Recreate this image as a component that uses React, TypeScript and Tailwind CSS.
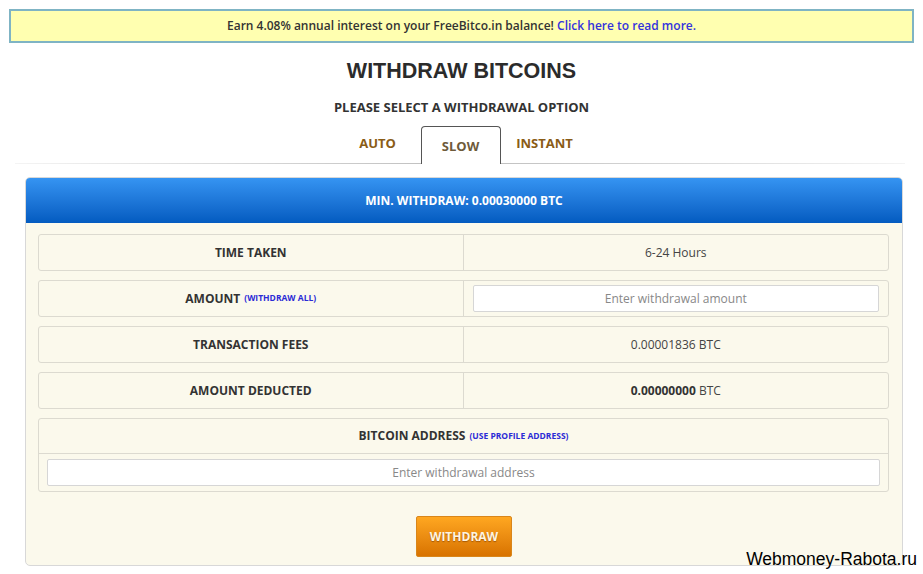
import React from "react";

const rows = [
  { label: "TIME TAKEN", value: "6-24 Hours" },
  { label: "AMOUNT", link: "(WITHDRAW ALL)", input: "Enter withdrawal amount" },
  { label: "TRANSACTION FEES", value: "0.00001836 BTC" },
  { label: "AMOUNT DEDUCTED", value: "0.00000000", bold: true },
];

function InfoRow({ row }: { row: (typeof rows)[number] }) {
  return (
    <div className="grid h-[37px] grid-cols-2 rounded-[3px] border border-[#dcdad0] bg-[#fbf9ec]">
      <div className="flex items-center justify-center border-r border-[#dcdad0] text-[12px] font-bold text-[#333]">
        {row.label}
        {row.link && (
          <span className="ml-1 text-[8.5px] font-bold text-[#2b2bd6]">{row.link}</span>
        )}
      </div>
      <div className="flex items-center justify-center px-[9px] text-[12px] text-[#444]">
        {row.input ? (
          <div className="flex h-[27px] w-full items-center justify-center rounded-[2px] border border-[#d6d6d6] bg-white text-[12px] text-[#888]">
            {row.input}
          </div>
        ) : row.bold ? (
          <span>
            <b className="text-[#333]">{row.value}</b> BTC
          </span>
        ) : (
          row.value
        )}
      </div>
    </div>
  );
}

export default function App() {
  return (
    <main
      className="relative h-[574px] w-[923px] overflow-hidden bg-white"
      style={{ fontFamily: "'Open Sans', 'Liberation Sans', sans-serif" }}
    >
      <div className="px-[9px] pt-[9px]">
        <div className="flex h-[34px] items-center justify-center border-2 border-[#7fb4c4] bg-[#ffffb0] text-[12px] font-semibold text-[#333]">
          Earn 4.08% annual interest on your FreeBitco.in balance!&nbsp;
          <span className="text-[#3333dd]">Click here to read more.</span>
        </div>
      </div>

      <h1 className="mt-[16px] text-center font-['Liberation_Sans',Arial,sans-serif] text-[21.5px] font-bold leading-[24px] text-[#2b2b2b]">
        WITHDRAW BITCOINS
      </h1>
      <p className="mt-[15px] text-center text-[13px] font-bold leading-[18px] text-[#333]">
        PLEASE SELECT A WITHDRAWAL OPTION
      </p>

      <div className="relative mt-[10px] h-[38px]">
        <div className="absolute bottom-0 left-[15px] right-[18px] h-px bg-gradient-to-r from-[#f4f4f4] via-[#bdbdbd] to-[#f4f4f4]" />
        <div className="relative flex h-full items-end justify-center text-[13px] font-bold text-[#8a5c16]">
          <div className="flex h-full w-[86px] items-center justify-center pb-[3px]">AUTO</div>
          <div className="flex h-full w-[80px] items-center justify-center rounded-t-[4px] border border-b-0 border-[#555] bg-white pt-[2px] text-[#6e5a3a]">
            SLOW
          </div>
          <div className="flex h-full w-[88px] items-center justify-center pb-[3px]">INSTANT</div>
        </div>
      </div>

      <section className="mx-[25px] mt-[13px] w-[878px] overflow-hidden rounded-[5px] border border-[#d8d8d8] bg-[#fbf9ec]">
        <div className="flex h-[45px] items-center justify-center bg-gradient-to-b from-[#3594f2] to-[#035bc0] text-[12px] font-bold text-white">
          MIN. WITHDRAW: 0.00030000 BTC
        </div>
        <div className="flex flex-col gap-[9px] pl-[12px] pr-[13px] pt-[11px] pb-[10px]">
          {rows.map((row) => (
            <InfoRow key={row.label} row={row} />
          ))}
          <div className="rounded-[3px] border border-[#dcdad0] bg-[#fbf9ec]">
            <div className="flex h-[35px] items-center justify-center border-b border-[#dcdad0] text-[12px] font-bold text-[#333]">
              BITCOIN ADDRESS
              <span className="ml-1 text-[8.5px] font-bold text-[#2b2bd6]">(USE PROFILE ADDRESS)</span>
            </div>
            <div className="px-[8px] py-[5px]">
              <div className="flex h-[27px] items-center justify-center rounded-[2px] border border-[#d6d6d6] bg-white text-[12px] text-[#888]">
                Enter withdrawal address
              </div>
            </div>
          </div>
        </div>
        <div className="flex justify-center pt-[14px] pb-[8px]">
          <button className="h-[41px] w-[96px] rounded-[2px] border border-[#d9861a] bg-gradient-to-b from-[#ffa720] to-[#d87300] text-[12px] font-bold text-[#fff4e0] [text-shadow:0_1px_1px_rgba(120,60,0,0.6)]">
            WITHDRAW
          </button>
        </div>
      </section>

      <div className="absolute bottom-[5px] right-[6px] font-['Liberation_Sans',Arial,sans-serif] text-[17.5px] leading-[20px] text-black">
        Webmoney-Rabota.ru
      </div>
    </main>
  );
}
